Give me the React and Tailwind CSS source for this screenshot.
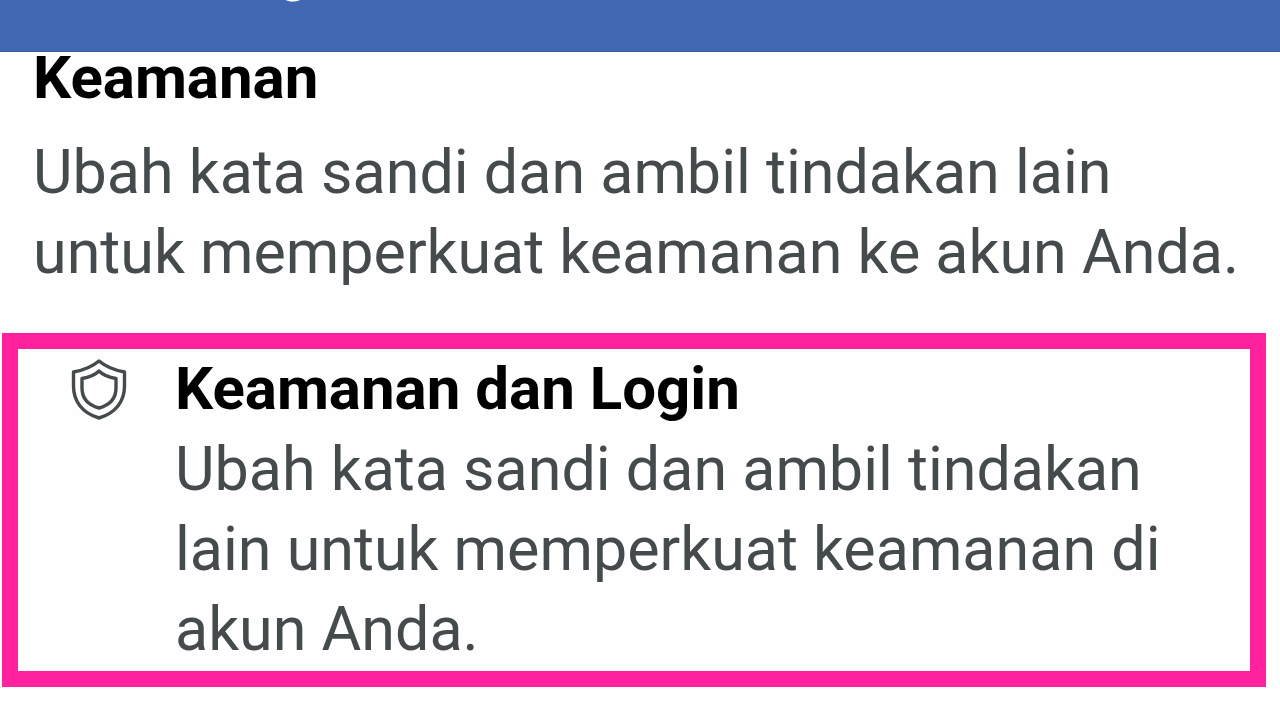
import React from 'react';

const ShieldIcon = () => (
    <svg
        viewBox="0 0 56 62"
        fill="none"
        stroke="#454b4d"
        strokeWidth="3.4"
        strokeLinejoin="round"
        className="w-14 h-[62px] shrink-0"
        aria-hidden="true"
    >
        <path d="M28 3 C22 8 14 12 2.500 14 V28 C2.500 43 11 55 28 60 C45 55 53.500 43 53.500 28 V14 C42 12 34 8 28 3 Z" />
        <path d="M28 13 C24 17 18 19.500 11 20.500 V30 C11 40 17 47 28 50 C39 47 45 40 45 30 V20.500 C38 19.500 32 17 28 13 Z" />
    </svg>
);

const Header = () => (
    <header className="h-13 overflow-hidden bg-[#4167b2] border-b border-[#3a5da6]">
        {/* Scrolled title bar, only the bottom edge stays in view */}
        <p className="-mt-[71px] pl-[173px] text-[60px] leading-[80px] font-medium text-white">Pengaturan</p>
    </header>
);

const SettingsItem = ({ icon, title, description }) => (
    <a href="#security" className="flex items-start pl-[53px] pr-10 pb-0.5">
        <span className="mt-[9px] shrink-0">{icon}</span>
        <span className="block ml-12">
            <span className="block text-[60px] leading-[80px] font-bold text-black">{title}</span>
            <span className="block text-[61px] leading-[80px] text-[#454b4d]">{description}</span>
        </span>
    </a>
);

const App = () => (
    <div className="min-h-screen bg-[#fefefe] font-['Roboto',sans-serif]">
        <Header />
        <main>
            <section className="pl-[33px] pr-6">
                <h1 className="text-[60px] leading-[52px] font-bold text-black">Keamanan</h1>
                <p className="mt-7 text-[61px] leading-[80px] text-[#454b4d]">
                    Ubah kata sandi dan ambil tindakan lain untuk memperkuat keamanan ke akun Anda.
                </p>
            </section>
            <div className="mt-[41px] ml-0.5 mr-3.5 border-[16px] border-[#ff219d]">
                <SettingsItem
                    icon={<ShieldIcon />}
                    title="Keamanan dan Login"
                    description="Ubah kata sandi dan ambil tindakan lain untuk memperkuat keamanan di akun Anda."
                />
            </div>
        </main>
    </div>
);

export default App;
